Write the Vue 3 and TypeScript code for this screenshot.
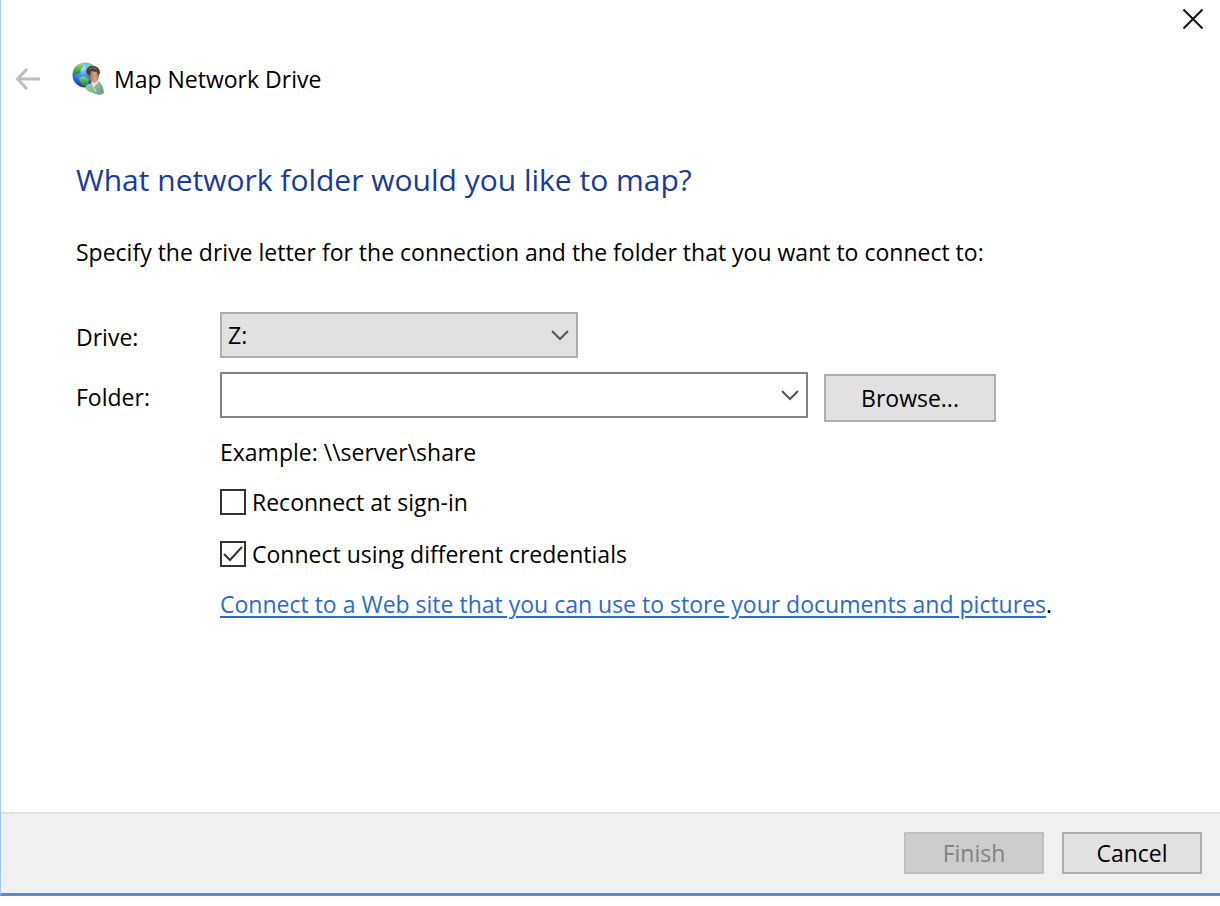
<script setup lang="ts">
import { ref } from 'vue'

const drives: string[] = ['Z:', 'Y:', 'X:', 'W:']
const drive = ref<string>('Z:')
const folder = ref<string>('')
const reconnect = ref<boolean>(false)
const otherCredentials = ref<boolean>(true)
</script>

<template>
  <main class="dialog">
    <div class="titlebar">
      <button class="icon-button close" type="button" aria-label="Close">
        <svg width="22" height="22" viewBox="0 0 22 22" fill="none" stroke="#111" stroke-width="2">
          <path d="M1.5 1.5 20.5 20.5M20.5 1.5 1.5 20.5" />
        </svg>
      </button>
    </div>

    <header class="header">
      <button class="icon-button back" type="button" aria-label="Back">
        <svg width="26" height="24" viewBox="0 0 26 24" fill="none" stroke="#bdbdbd" stroke-width="3">
          <path d="M25 12H3M12 2 2.500 12 12 22" />
        </svg>
      </button>
      <svg class="logo" width="34" height="34" viewBox="0 0 34 34" aria-hidden="true">
        <defs>
          <radialGradient id="globe" cx="0.4" cy="0.2" r="0.85">
            <stop offset="0" stop-color="#b9ecfb" />
            <stop offset="0.35" stop-color="#4a9ff0" />
            <stop offset="0.75" stop-color="#1c4bd4" />
            <stop offset="1" stop-color="#122a8c" />
          </radialGradient>
          <linearGradient id="land" x1="0" y1="0" x2="0" y2="1">
            <stop offset="0" stop-color="#8fd86a" />
            <stop offset="1" stop-color="#238436" />
          </linearGradient>
          <linearGradient id="face" x1="0" y1="0" x2="1" y2="0">
            <stop offset="0" stop-color="#8f5a36" />
            <stop offset="0.6" stop-color="#d9a27c" />
            <stop offset="1" stop-color="#b87c55" />
          </linearGradient>
          <linearGradient id="coat" x1="0" y1="0" x2="1" y2="1">
            <stop offset="0" stop-color="#a8d6b8" />
            <stop offset="1" stop-color="#5f9c7c" />
          </linearGradient>
        </defs>
        <circle cx="13" cy="13" r="12.500" fill="url(#globe)" />
        <path d="M2 7Q5 2 10 2L12 4 9 7 8 11 4 13 1 11Z" fill="url(#land)" />
        <path d="M15 1 20 3 22 6 16 6Z" fill="#8ed38a" />
        <path d="M7 16 12 14 17 17 16 24 11 24 8 20Z" fill="url(#land)" />
        <path d="M13 26Q14 22 20 21L26 19Q31 21 32 31Q29 34 24 32L16 29Z" fill="url(#coat)" />
        <path d="M19 19 25 18 26 21 21 26Z" fill="#f1ded0" />
        <path d="M16 9Q20 5 26 8L27 14Q26 20 22 21L19 19 17 15Z" fill="url(#face)" />
        <path d="M14 9Q16 3 22 4Q28 5 28 11L26 14 25 10 19 9 18 14 15 12Z" fill="#4b3f39" />
        <path d="M17 7Q20 4 25 7" fill="none" stroke="#82766f" />
        <path d="M22 26 24 30" fill="none" stroke="#d4eddc" />
      </svg>
      <span class="app-name">Map Network Drive</span>
    </header>

    <section class="content">
      <h1>What network folder would you like to map?</h1>
      <p class="intro">Specify the drive letter for the connection and the folder that you want to connect to:</p>

      <form id="map-form" class="form" @submit.prevent>
        <label for="drive">Drive:</label>
        <div class="drive-box">
          <select id="drive" v-model="drive">
            <option v-for="d in drives" :key="d" :value="d">{{ d }}</option>
          </select>
          <svg class="chevron" width="18" height="12" viewBox="0 0 18 12" fill="none" stroke="#555" stroke-width="2">
            <path d="M1 2 9 10 17 2" />
          </svg>
        </div>

        <label for="folder">Folder:</label>
        <div class="folder-row">
          <div class="combo">
            <input id="folder" v-model="folder" type="text" autocomplete="off" />
            <button class="icon-button drop" type="button" aria-label="Show recent folders">
              <svg width="18" height="12" viewBox="0 0 18 12" fill="none" stroke="#555" stroke-width="2">
                <path d="M1 2 9 10 17 2" />
              </svg>
            </button>
          </div>
          <button class="button browse" type="button">Browse...</button>
        </div>

        <div class="options">
          <p>Example: \\server\share</p>
          <div class="checks">
            <label class="check">
              <input v-model="reconnect" type="checkbox" />
              <svg class="box" width="26" height="26" viewBox="0 0 26 26" fill="none" stroke="#333" stroke-width="2" aria-hidden="true">
                <rect x="1" y="1" width="24" height="24" fill="#fff" />
                <path v-if="reconnect" d="M4 13 10 19 22 6" />
              </svg>
              Reconnect at sign-in
            </label>
            <label class="check">
              <input v-model="otherCredentials" type="checkbox" />
              <svg class="box" width="26" height="26" viewBox="0 0 26 26" fill="none" stroke="#333" stroke-width="2" aria-hidden="true">
                <rect x="1" y="1" width="24" height="24" fill="#fff" />
                <path v-if="otherCredentials" d="M4 13 10 19 22 6" />
              </svg>
              Connect using different credentials
            </label>
          </div>
          <p><a href="#">Connect to a Web site that you can use to store your documents and pictures</a>.</p>
        </div>
      </form>
    </section>

    <footer class="footer">
      <button class="button" type="submit" form="map-form" disabled>Finish</button>
      <button class="button" type="button">Cancel</button>
    </footer>
  </main>
</template>

<style>
body {
  margin: 0;
  background: #fff;
}
</style>

<style scoped>
.dialog {
  box-sizing: border-box;
  display: flex;
  flex-direction: column;
  min-height: calc(100vh - 10px);
  border-left: 1px solid #a3cbf1;
  border-bottom: 3px solid #4a90d9;
  background: #fff;
  color: #000;
  font: 23px/32px "Open Sans", "Noto Sans", sans-serif;
}

h1,
p {
  margin: 0;
}

button,
input,
select {
  font: inherit;
  color: inherit;
}

.icon-button {
  display: flex;
  align-items: center;
  justify-content: center;
  padding: 0;
  border: 0;
  background: transparent;
}

.titlebar {
  display: flex;
  justify-content: flex-end;
}

.close {
  width: 54px;
  height: 38px;
}

.header {
  display: flex;
  align-items: center;
  height: 82px;
  padding-left: 14px;
}

.logo {
  margin-left: 31px;
}

.app-name {
  margin-left: 8px;
}

.content {
  flex: 1;
  padding: 40px 20px 40px 75px;
}

h1 {
  color: #1a3c96;
  font-size: 30px;
  font-weight: 400;
  line-height: 40px;
}

.intro {
  margin-top: 36px;
}

.form {
  display: grid;
  grid-template-columns: 144px 1fr;
  row-gap: 14px;
  margin-top: 44px;
}

.form > label {
  line-height: 50px;
}

.drive-box {
  display: grid;
  align-items: center;
  width: 358px;
  height: 46px;
}

.drive-box > * {
  grid-area: 1 / 1;
}

select {
  appearance: none;
  width: 100%;
  height: 46px;
  padding: 0 40px 0 6px;
  border: 2px solid #adadad;
  border-radius: 0;
  background: #e1e1e1;
}

.chevron {
  justify-self: end;
  margin-right: 9px;
  pointer-events: none;
}

.form > label:first-child {
  height: 46px;
}

.folder-row {
  display: flex;
  gap: 16px;
}

.combo {
  box-sizing: border-box;
  display: flex;
  width: 588px;
  height: 46px;
  border: 2px solid #838383;
}

.combo input {
  flex: 1;
  min-width: 0;
  padding: 0 6px;
  border: 0;
  outline: 0;
  background: transparent;
}

.drop {
  width: 32px;
}

.button {
  width: 140px;
  height: 42px;
  padding: 0;
  border: 2px solid #adadad;
  background: #e1e1e1;
}

.button:disabled {
  border-color: #bfbfbf;
  background: #ccc;
  color: #838383;
}

.browse {
  width: 172px;
  height: 48px;
  margin-top: 2px;
}

.options {
  grid-column: 2;
  display: grid;
  justify-items: start;
  row-gap: 18px;
}

.checks {
  display: grid;
  row-gap: 20px;
}

.check {
  display: flex;
  align-items: center;
  gap: 6px;
}

.check input {
  position: absolute;
  width: 26px;
  height: 26px;
  margin: 0;
  opacity: 0;
}

a {
  color: #2a6bcb;
  text-decoration-thickness: 2px;
  text-underline-offset: 3px;
}

.footer {
  display: flex;
  justify-content: flex-end;
  gap: 18px;
  padding: 18px 18px 19px;
  border-top: 2px solid #dfdfdf;
  background: #f0f0f0;
}
</style>
